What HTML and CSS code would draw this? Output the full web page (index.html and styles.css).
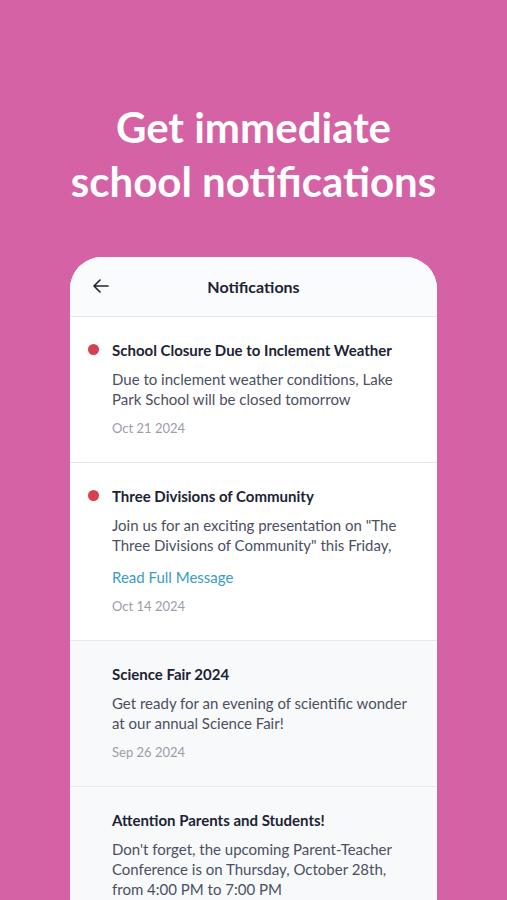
FILE: index.html
```html
<!DOCTYPE html>
<html lang="en">
<head>
    <meta charset="UTF-8">
    <meta name="viewport" content="width=device-width, initial-scale=1.0">
    <title>Notifications</title>
    <link rel="stylesheet" href="styles.css">
</head>
<body>
    <div class="screen">
        <h1 class="headline">Get immediate<br>school notifications</h1>
        <div class="phone">
            <div class="topbar">
                <svg class="back" width="16" height="14" viewBox="0 0 16 14" fill="none" stroke="#1c2434" stroke-width="1.6" stroke-linecap="round" stroke-linejoin="round">
                    <path d="M15 7H1.5M7 1L1 7l6 6"/>
                </svg>
                <span class="topbar-title">Notifications</span>
            </div>
            <div class="list">
                <div class="item">
                    <span class="dot"></span>
                    <div class="item-title">School Closure Due to Inclement Weather</div>
                    <div class="item-text">Due to inclement weather conditions, Lake Park School will be closed tomorrow</div>
                    <div class="item-date">Oct 21 2024</div>
                </div>
                <div class="item">
                    <span class="dot"></span>
                    <div class="item-title">Three Divisions of Community</div>
                    <div class="item-text">Join us for an exciting presentation on "The Three Divisions of Community" this Friday,</div>
                    <a class="item-link" href="#">Read Full Message</a>
                    <div class="item-date">Oct 14 2024</div>
                </div>
                <div class="item read">
                    <div class="item-title">Science Fair 2024</div>
                    <div class="item-text">Get ready for an evening of scientific wonder at our annual Science Fair!</div>
                    <div class="item-date">Sep 26 2024</div>
                </div>
                <div class="item read">
                    <div class="item-title">Attention Parents and Students!</div>
                    <div class="item-text">Don't forget, the upcoming Parent-Teacher Conference is on Thursday, October 28th, from 4:00 PM to 7:00 PM</div>
                </div>
            </div>
        </div>
    </div>
</body>
</html>
```
FILE: styles.css
```css
body {
    margin: 0;
    background: #d462a5;
    font-family: Lato, "Open Sans", sans-serif;
    color: #1c2434;
}
.screen {
    height: 900px;
    overflow: hidden;
    display: flex;
    flex-direction: column;
    align-items: center;
}
.headline {
    margin: 100px 0 0;
    color: #fff;
    font-size: 42px;
    line-height: 54px;
    font-weight: 700;
    text-align: center;
}
.phone {
    margin-top: 49px;
    width: 367px;
    background: #fff;
    border-radius: 32px 32px 0 0;
    overflow: hidden;
    flex-shrink: 0;
}
.topbar {
    position: relative;
    height: 59px;
    display: flex;
    align-items: center;
    justify-content: center;
    background: #fafbfc;
    border-bottom: 1px solid #e6e8ec;
}
.back {
    position: absolute;
    left: 23px;
    top: 22px;
}
.topbar-title {
    font-size: 16px;
    font-weight: 700;
}
.item {
    position: relative;
    padding: 23px 24px 24px 42px;
    border-bottom: 1px solid #e6e8ec;
    background: #fff;
}
.item.read {
    background: #f8f9fb;
}
.dot {
    position: absolute;
    left: 18px;
    top: 27px;
    width: 11px;
    height: 11px;
    border-radius: 50%;
    background: #d6404f;
}
.item-title {
    font-size: 15px;
    line-height: 20px;
    font-weight: 700;
}
.item-text {
    margin-top: 9px;
    font-size: 15px;
    line-height: 20px;
    color: #4b5060;
}
.item-link {
    display: block;
    margin-top: 12px;
    font-size: 15px;
    line-height: 20px;
    color: #3a9cc0;
    text-decoration: none;
}
.item-date {
    margin-top: 9px;
    font-size: 13px;
    line-height: 20px;
    color: #9a9ea8;
}
```
